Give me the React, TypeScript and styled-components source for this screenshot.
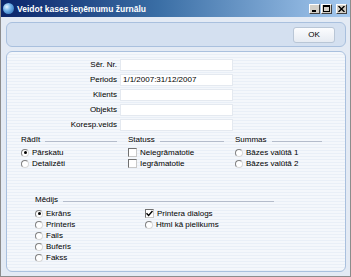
import { Fragment } from 'react';
import styled, { createGlobalStyle } from 'styled-components';

const Global = createGlobalStyle`
  html, body {
    margin: 0;
    padding: 0;
    background: #ffffff;
  }
  * {
    box-sizing: border-box;
  }
`;

const S = {
  Window: styled.div`
    width: 351px;
    height: 277px;
    display: flex;
    flex-direction: column;
    background: #e3eaf4;
    border: 1px solid #8c8c8c;
    border-top: none;
    font-family: "Liberation Sans", Arial, sans-serif;
    font-size: 8px;
    color: #000;
    overflow: hidden;
  `,
  TitleBar: styled.div`
    height: 17px;
    flex: none;
    display: flex;
    align-items: center;
    padding: 0 3px 0 2px;
    background: linear-gradient(to right, #0a246a 0%, #3a6ea5 45%, #a6caf0 100%);
  `,
  AppIcon: styled.div`
    width: 11px;
    height: 11px;
    border-radius: 50%;
    margin-right: 3px;
    background: radial-gradient(circle at 35% 35%, #e8f4ff 0%, #6fb0e8 40%, #1d5fa8 100%);
  `,
  Title: styled.span`
    flex: 1;
    color: #fff;
    font-weight: bold;
    font-size: 8.5px;
  `,
  WinButtons: styled.div`
    display: flex;
    gap: 1px;
  `,
  WinButton: styled.div<{ $gap?: boolean }>`
    width: 11px;
    height: 10px;
    margin-left: ${(p) => (p.$gap ? '3px' : '0')};
    background: #d4d0c8;
    border: 1px solid;
    border-color: #ffffff #404040 #404040 #ffffff;
    display: flex;
    align-items: center;
    justify-content: center;
  `,
  Body: styled.div`
    flex: 1;
    display: flex;
    flex-direction: column;
    gap: 4px;
    padding: 5px 4px 4px 5px;
  `,
  TopPanel: styled.div`
    height: 25px;
    flex: none;
    display: flex;
    align-items: center;
    justify-content: flex-end;
    padding-right: 10px;
    border: 1px solid #a9c0de;
    border-radius: 6px;
    background: #d4e0f0;
  `,
  OkButton: styled.div`
    width: 42px;
    height: 16px;
    display: flex;
    align-items: center;
    justify-content: center;
    border: 1px solid #b9c6d6;
    border-radius: 3px;
    background: linear-gradient(#fbfcfe, #e6ebf2);
    font-size: 8px;
  `,
  MainPanel: styled.div`
    flex: 1;
    padding-top: 7px;
    border: 1px solid #a9c0de;
    border-radius: 6px;
    background: repeating-linear-gradient(#f4f7fb 0px, #f4f7fb 2px, #e9eff7 2px, #e9eff7 3px);
  `,
  Form: styled.div`
    display: grid;
    grid-template-columns: 110px 113px;
    grid-auto-rows: 12px;
    column-gap: 3px;
    row-gap: 3px;
  `,
  Label: styled.div`
    text-align: right;
    line-height: 12px;
  `,
  Input: styled.div`
    background: #fff;
    border: 1px solid #e4e9f0;
    padding-left: 2px;
    line-height: 10px;
  `,
  Sections: styled.div`
    display: flex;
    gap: 11px;
    padding-left: 14px;
    margin-top: 4px;
  `,
  Section: styled.div<{ $width: number }>`
    width: ${(p) => p.$width}px;
    display: flex;
    flex-direction: column;
  `,
  Header: styled.div`
    display: flex;
    align-items: center;
    height: 10px;
    line-height: 10px;
    &::after {
      content: '';
      flex: 1;
      height: 1px;
      margin: 2px 0 0 5px;
      background: #b4bccb;
    }
  `,
  Options: styled.div`
    display: flex;
    flex-direction: column;
    margin-top: 2px;
  `,
  Option: styled.div`
    height: 11px;
    display: flex;
    align-items: center;
    gap: 3px;
  `,
  Radio: styled.span<{ $on?: boolean }>`
    width: 8px;
    height: 8px;
    flex: none;
    border-radius: 50%;
    border: 1px solid;
    border-color: #808080 #d8d8d8 #d8d8d8 #808080;
    background: #fff;
    display: flex;
    align-items: center;
    justify-content: center;
    &::after {
      content: '';
      width: 3px;
      height: 3px;
      border-radius: 50%;
      background: ${(p) => (p.$on ? '#000' : 'transparent')};
    }
  `,
  Check: styled.span`
    width: 9px;
    height: 9px;
    flex: none;
    border: 1px solid;
    border-color: #707070 #c8c8c8 #c8c8c8 #707070;
    background: #fff;
    display: flex;
    align-items: center;
    justify-content: center;
  `,
  Media: styled.div`
    margin: 26px 0 0 28px;
    width: 239px;
  `,
  MediaCols: styled.div`
    display: flex;
    margin-top: 3px;
  `,
  MediaCol: styled.div<{ $width?: number }>`
    width: ${(p) => (p.$width ? `${p.$width}px` : 'auto')};
    display: flex;
    flex-direction: column;
  `,
};

const Tick = () => (
  <svg width="7" height="7" viewBox="0 0 7 7">
    <path d="M0.5 3.2 L2.6 5.4 L6.5 1" stroke="#000" strokeWidth="1.4" fill="none" />
  </svg>
);

function RadioItem({ label, on }: { label: string; on?: boolean }) {
  return (
    <S.Option>
      <S.Radio $on={on} />
      <span>{label}</span>
    </S.Option>
  );
}

function CheckItem({ label, on }: { label: string; on?: boolean }) {
  return (
    <S.Option>
      <S.Check>{on && <Tick />}</S.Check>
      <span>{label}</span>
    </S.Option>
  );
}

const fields: [string, string][] = [
  ['Sēr. Nr.', ''],
  ['Periods', '1/1/2007:31/12/2007'],
  ['Klients', ''],
  ['Objekts', ''],
  ['Koresp.veids', ''],
];

export default function App() {
  return (
    <>
      <Global />
      <S.Window>
        <S.TitleBar>
          <S.AppIcon />
          <S.Title>Veidot kases ieņēmumu žurnālu</S.Title>
          <S.WinButtons>
            <S.WinButton>
              <svg width="7" height="6" viewBox="0 0 7 6">
                <rect x="1" y="4" width="4" height="2" fill="#000" />
              </svg>
            </S.WinButton>
            <S.WinButton>
              <svg width="7" height="7" viewBox="0 0 7 7">
                <rect x="0.5" y="0.5" width="6" height="6" fill="none" stroke="#000" />
                <rect x="0" y="0" width="7" height="2" fill="#000" />
              </svg>
            </S.WinButton>
            <S.WinButton $gap>
              <svg width="7" height="6" viewBox="0 0 7 6">
                <path d="M0.5 0 L6.5 6 M6.5 0 L0.5 6" stroke="#000" strokeWidth="1.4" />
              </svg>
            </S.WinButton>
          </S.WinButtons>
        </S.TitleBar>
        <S.Body>
          <S.TopPanel>
            <S.OkButton>OK</S.OkButton>
          </S.TopPanel>
          <S.MainPanel>
            <S.Form>
              {fields.map(([label, value]) => (
                <Fragment key={label}>
                  <S.Label>{label}</S.Label>
                  <S.Input>{value}</S.Input>
                </Fragment>
              ))}
            </S.Form>
            <S.Sections>
              <S.Section $width={96}>
                <S.Header>Rādīt</S.Header>
                <S.Options>
                  <RadioItem label="Pārskatu" on />
                  <RadioItem label="Detalizēti" />
                </S.Options>
              </S.Section>
              <S.Section $width={96}>
                <S.Header>Statuss</S.Header>
                <S.Options>
                  <CheckItem label="Neiegrāmatotie" />
                  <CheckItem label="Iegrāmatotie" />
                </S.Options>
              </S.Section>
              <S.Section $width={87}>
                <S.Header>Summas</S.Header>
                <S.Options>
                  <RadioItem label="Bāzes valūtā 1" />
                  <RadioItem label=" Bāzes valūtā 2" />
                </S.Options>
              </S.Section>
            </S.Sections>
            <S.Media>
              <S.Header>Mēdijs</S.Header>
              <S.MediaCols>
                <S.MediaCol $width={110}>
                  <RadioItem label="Ekrāns" on />
                  <RadioItem label="Printeris" />
                  <RadioItem label="Fails" />
                  <RadioItem label="Buferis" />
                  <RadioItem label="Fakss" />
                </S.MediaCol>
                <S.MediaCol>
                  <CheckItem label="Printera dialogs" on />
                  <RadioItem label="Html kā pielikums" />
                </S.MediaCol>
              </S.MediaCols>
            </S.Media>
          </S.MainPanel>
        </S.Body>
      </S.Window>
    </>
  );
}
